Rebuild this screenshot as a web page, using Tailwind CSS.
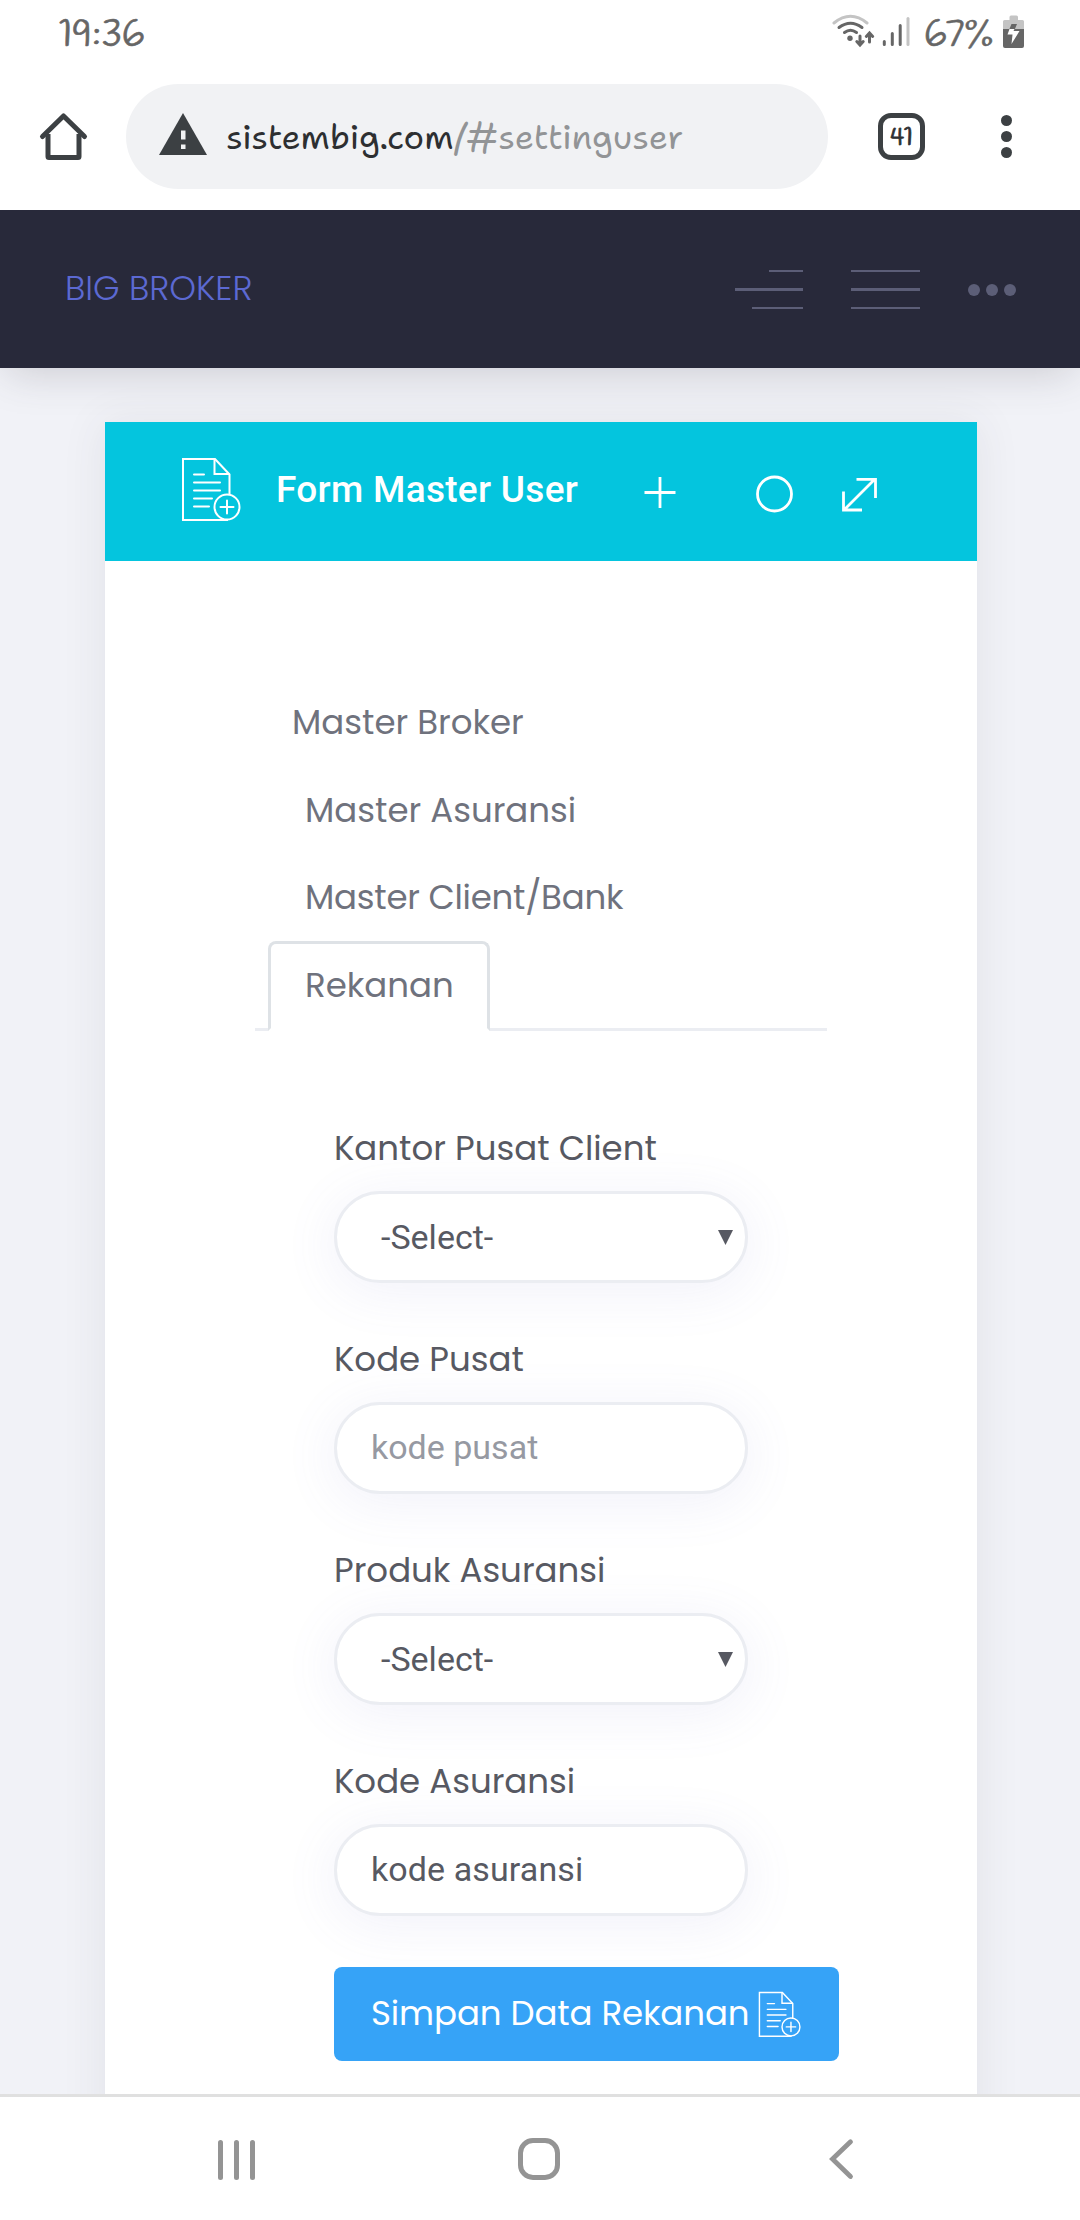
<!DOCTYPE html>
<html lang="id">
<head>
<meta charset="utf-8">
<title>Form Master User</title>
<script src="https://cdn.jsdelivr.net/npm/@tailwindcss/browser@4"></script>
</head>
<body class="flex h-[2220px] w-[1080px] flex-col overflow-hidden bg-[#f1f2f7] font-[Poppins,Inter,sans-serif] text-[34px] text-[#575962]">

<!-- Shared icons -->
<svg class="hidden">
  <symbol id="doc-add" viewBox="0 0 60 64">
    <g fill="none" stroke="currentColor" stroke-width="2">
      <path d="M48.500 37.500V17.500L34 2H2V63H47"/>
      <path d="M33.500 2V17H48.500"/>
      <path stroke-linecap="round" d="M13 17.500H23M13 25.500H39M13 33.500H39M13 41.500H31M13 49.500H28"/>
      <circle cx="46" cy="50" r="12.500"/>
      <path stroke-linecap="round" d="M46 43.500V56.500M39.500 50H52.500"/>
    </g>
  </symbol>
</svg>

<!-- Status bar -->
<div class="flex h-[68px] shrink-0 items-start justify-between bg-white pr-14 pl-[59px] font-[Handlee,'Comic_Neue',cursive] text-[39px] text-[#666]">
  <span class="pt-[10px] leading-[52px] [-webkit-text-stroke:0.6px_#666]">19:36</span>
  <div class="flex">
    <svg class="h-[68px] w-[92px]" viewBox="0 0 92 68" fill="none" stroke="#666" stroke-width="3" stroke-linecap="round">
      <path stroke="#c4c4c4" d="M2 23Q18.500 9.500 35 23"/>
      <path d="M7 27.500Q18.500 19 30 27.500"/>
      <path d="M12.500 32.500Q18.500 28 24.500 32.500"/>
      <circle cx="18" cy="38.200" r="2.700" fill="#666" stroke="none"/>
      <path d="M28 36V44.500M24.800 41.500L28 45L31.200 41.500M37.500 42V34M34.300 36.500L37.500 33L40.700 36.500"/>
      <path d="M52.300 41.500V44.500M60.300 33.500V44.500M68.200 25.500V44.500"/>
      <path stroke="#c4c4c4" d="M76 18.500V44.500"/>
    </svg>
    <span class="w-[79px] pt-[10px] leading-[52px] [-webkit-text-stroke:0.6px_#666]">67%</span>
    <svg class="h-[68px] w-[21px]" viewBox="0 0 21 68">
      <path fill="#c4c4c4" d="M6.500 20V17Q6.500 15.500 8 15.500H13.500Q15 15.500 15 17V20H19.500Q21 20 21 21.500V29H0V21.500Q0 20 1.500 20Z"/>
      <path fill="#666" d="M0 29H21V46Q21 48 19 48H2Q0 48 0 46Z"/>
      <path fill="#666" d="M8.500 24H14L11.500 30H6Z"/>
      <path fill="#fff" d="M6.500 29H11.500L10.500 31H16.500L8.500 44L9.500 34.500H4.500Z"/>
    </svg>
  </div>
</div>

<!-- Browser toolbar -->
<div class="flex h-[142px] shrink-0 items-start bg-white pt-4 pl-[38px] font-['Shantell_Sans','Comic_Neue',cursive]">
  <svg class="mt-[27px] mr-[37px] size-[51px]" viewBox="0 0 51 51" fill="none" stroke="#3c4043" stroke-width="5" stroke-linejoin="round">
    <path d="M10 23V45.500Q10 46.500 11 46.500H40Q41 46.500 41 45.500V23"/>
    <path stroke-linecap="round" d="M4.500 25.500L25.500 5L46.500 25.500"/>
  </svg>
  <div class="flex h-[105px] w-[702px] items-center rounded-full bg-[#f1f2f4] pl-[33px]">
    <svg class="mt-[-6px] mr-[19px] h-[42px] w-12" viewBox="0 0 48 42"><path fill="#3c4043" d="M24 0L48 42H0Z"/><path fill="#f1f2f4" d="M22 17.500H26.500V26.500H22ZM22 31.500H26.500V36H22Z"/></svg>
    <span class="leading-[52px] tracking-[0.13px] text-[#2d2f31]">sistembig.com<span class="text-[#929496]">/#settinguser</span></span>
  </div>
  <div class="mt-[29px] ml-[50px] flex h-[47px] w-[47px] items-center justify-center rounded-[13px] border-5 border-[#3c4043] pt-[2px] font-[Handlee,'Comic_Neue',cursive] text-[26px] leading-none text-[#2d3033] [-webkit-text-stroke:0.8px_#2d3033]">41</div>
  <div class="mt-[31px] ml-[76px] flex flex-col gap-[5px]">
    <i class="size-[11px] rounded-full bg-[#3c4043]"></i><i class="size-[11px] rounded-full bg-[#3c4043]"></i><i class="size-[11px] rounded-full bg-[#3c4043]"></i>
  </div>
</div>

<!-- Site header -->
<header class="z-10 flex h-[158px] shrink-0 items-start bg-[#28293a] pl-[65px] shadow-[0_10px_40px_-6px_rgba(69,65,78,0.22)] [clip-path:inset(0_0_-80px_0)]">
  <span class="w-[670px] pt-[50px] leading-[56px] font-light text-[#5c69d2]">BIG BROKER</span>
  <div class="mt-[60px] flex w-[68px] flex-col items-end gap-4">
    <i class="h-[2px] w-[34px] bg-[#5c5e77]"></i><i class="h-[3px] w-[68px] bg-[#5c5e77]"></i><i class="h-[2px] w-[51px] bg-[#5c5e77]"></i>
  </div>
  <div class="mt-[60px] ml-12 flex w-[69px] flex-col gap-4">
    <i class="h-[2px] bg-[#5c5e77]"></i><i class="h-[3px] bg-[#5c5e77]"></i><i class="h-[2px] bg-[#5c5e77]"></i>
  </div>
  <div class="mt-[74px] ml-[48px] flex gap-[6px]">
    <i class="size-3 rounded-full bg-[#5c5e77]"></i><i class="size-3 rounded-full bg-[#5c5e77]"></i><i class="size-3 rounded-full bg-[#5c5e77]"></i>
  </div>
</header>

<!-- Page -->
<main class="min-h-0 flex-1 overflow-hidden pt-[54px]">
  <section class="ml-[105px] h-[1800px] w-[872px] bg-white shadow-[0_3px_40px_3px_rgba(69,65,78,0.08)]">
    <div class="flex h-[139px] items-start bg-[#04c5de] text-white">
      <svg class="mt-[35px] ml-[76px] h-16 w-[60px]"><use href="#doc-add"/></svg>
      <h1 class="ml-[35px] w-[367px] pt-[42px] font-[Roboto,sans-serif] text-[37px] leading-[52px] font-medium tracking-[0.3px]">Form Master User</h1>
      <svg class="mt-[50px] h-11 w-[240px]" viewBox="0 0 240 44" fill="none" stroke="currentColor" stroke-width="2.800">
        <path d="M1.500 20.500H32.500M17 5V36"/>
        <circle cx="131.500" cy="22" r="17"/>
        <path d="M201.500 37.500L231 8M213.500 7.300H232.500V26M200.500 19.500V38H219"/>
      </svg>
    </div>

    <ul class="mt-[117px] ml-[150px] flex h-[353px] w-[572px] flex-col items-start border-b-3 border-[#ebedf2] leading-[88px] text-[#6f727d]">
      <li class="h-[87.700px] pl-[37px]">Master Broker</li>
      <li class="h-[87.700px] pl-[50px]">Master Asuransi</li>
      <li class="h-[87.700px] pl-[50px] tracking-[-0.25px]">Master Client/Bank</li>
      <li class="mb-[-3px] ml-[13px] h-[90px] w-[222px] rounded-t-lg border-3 border-[#dee2e6] border-b-white bg-white pl-[34px] leading-[82px]">Rekanan</li>
    </ul>

    <form class="ml-[229px] flex w-[506px] flex-col pt-[94px]">
      <label class="h-[46px] leading-[46px]">Kantor Pusat Client</label>
      <div class="mt-5 flex h-[92px] w-[414px] items-center justify-between rounded-full border-3 border-[#ebedf2] bg-white pr-3 pl-11 font-[Roboto,sans-serif] shadow-[0_8px_52px_3px_rgba(113,106,202,0.09)]">-Select-<svg class="h-[15px] w-[15px]" viewBox="0 0 15 15"><path fill="#575962" d="M0 0H15L7.500 15Z"/></svg></div>

      <label class="mt-[53px] h-[46px] leading-[46px]">Kode Pusat</label>
      <input placeholder="kode pusat" class="mt-5 h-[92px] w-[414px] rounded-full border-3 border-[#ebedf2] bg-white pb-[2px] pl-[34px] font-[Roboto,sans-serif] shadow-[0_8px_52px_3px_rgba(113,106,202,0.09)] placeholder:text-[#9699a2]">

      <label class="mt-[53px] h-[46px] leading-[46px]">Produk Asuransi</label>
      <div class="mt-5 flex h-[92px] w-[414px] items-center justify-between rounded-full border-3 border-[#ebedf2] bg-white pr-3 pl-11 font-[Roboto,sans-serif] shadow-[0_8px_52px_3px_rgba(113,106,202,0.09)]">-Select-<svg class="h-[15px] w-[15px]" viewBox="0 0 15 15"><path fill="#575962" d="M0 0H15L7.500 15Z"/></svg></div>

      <label class="mt-[53px] h-[46px] leading-[46px]">Kode Asuransi</label>
      <input value="kode asuransi" class="mt-5 h-[92px] w-[414px] rounded-full border-3 border-[#ebedf2] bg-white pb-[2px] pl-[34px] font-[Roboto,sans-serif] tracking-[0.100px] shadow-[0_8px_52px_3px_rgba(113,106,202,0.09)]">

      <button type="button" class="relative mt-[51px] flex h-[94px] w-[505px] items-center rounded-lg bg-[#36a3f7] pl-[37px] text-white"><span class="w-[387px] pb-[2px] text-left tracking-[-0.1px]">Simpan Data Rekanan</span><svg class="h-[46px] w-[43px]"><use href="#doc-add"/></svg></button>
    </form>
  </section>
</main>

<!-- System navigation -->
<nav class="z-10 flex h-[126px] shrink-0 border-t-3 border-[#e0e0e0] bg-white pt-[41px] pl-[218px]">
  <div class="mt-[2px] flex h-10 w-[300px] gap-[11px]">
    <i class="w-[5px] rounded-full bg-[#949494]"></i><i class="w-[5px] rounded-full bg-[#949494]"></i><i class="w-[5px] rounded-full bg-[#949494]"></i>
  </div>
  <div class="size-[42px] rounded-[15px] border-5 border-[#949494]"></div>
  <svg class="ml-[268px] h-[42px] w-[26px]" viewBox="0 0 26 42" fill="none" stroke="#949494" stroke-width="4.800" stroke-linecap="round"><path d="M22.500 3.800L4.500 21L22.500 38.500"/></svg>
</nav>
</body>
</html>
